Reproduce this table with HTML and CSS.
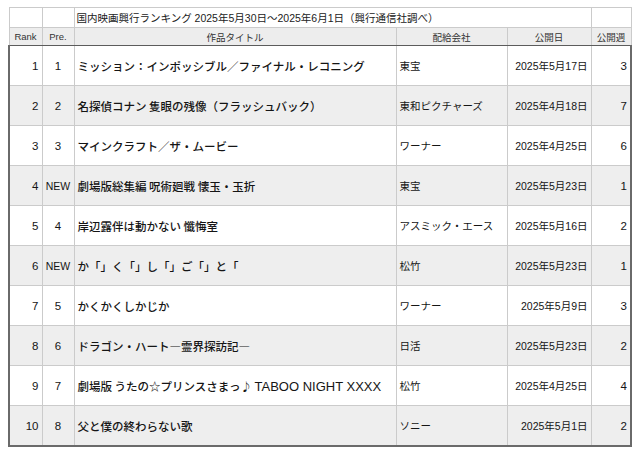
FILE: index.html
```html
<!DOCTYPE html>
<html lang="ja">
<head>
<meta charset="utf-8">
<link rel="stylesheet" href="styles.css">
</head>
<body>
<table class="rank-table">
  <colgroup>
    <col class="c-rank"><col class="c-pre"><col class="c-title"><col class="c-dist"><col class="c-date"><col class="c-week">
  </colgroup>
  <thead>
    <tr class="caption-row">
      <td></td><td></td>
      <td colspan="3" class="caption">国内映画興行ランキング 2025年5月30日〜2025年6月1日（興行通信社調べ）</td>
      <td></td>
    </tr>
    <tr class="head-row">
      <th>Rank</th><th>Pre.</th><th>作品タイトル</th><th>配給会社</th><th>公開日</th><th>公開週</th>
    </tr>
  </thead>
  <tbody>
    <tr><td class="rank">1</td><td class="pre">1</td><td class="title">ミッション：インポッシブル／ファイナル・レコニング</td><td class="dist">東宝</td><td class="date">2025年5月17日</td><td class="week">3</td></tr>
    <tr class="alt"><td class="rank">2</td><td class="pre">2</td><td class="title">名探偵コナン 隻眼の残像（フラッシュバック）</td><td class="dist">東和ピクチャーズ</td><td class="date">2025年4月18日</td><td class="week">7</td></tr>
    <tr><td class="rank">3</td><td class="pre">3</td><td class="title">マインクラフト／ザ・ムービー</td><td class="dist">ワーナー</td><td class="date">2025年4月25日</td><td class="week">6</td></tr>
    <tr class="alt"><td class="rank">4</td><td class="pre new">NEW</td><td class="title">劇場版総集編 呪術廻戦 懐玉・玉折</td><td class="dist">東宝</td><td class="date">2025年5月23日</td><td class="week">1</td></tr>
    <tr><td class="rank">5</td><td class="pre">4</td><td class="title">岸辺露伴は動かない 懺悔室</td><td class="dist">アスミック・エース</td><td class="date">2025年5月16日</td><td class="week">2</td></tr>
    <tr class="alt"><td class="rank">6</td><td class="pre new">NEW</td><td class="title">か「」く「」し「」ご「」と「</td><td class="dist">松竹</td><td class="date">2025年5月23日</td><td class="week">1</td></tr>
    <tr><td class="rank">7</td><td class="pre">5</td><td class="title">かくかくしかじか</td><td class="dist">ワーナー</td><td class="date">2025年5月9日</td><td class="week">3</td></tr>
    <tr class="alt"><td class="rank">8</td><td class="pre">6</td><td class="title">ドラゴン・ハート―霊界探訪記―</td><td class="dist">日活</td><td class="date">2025年5月23日</td><td class="week">2</td></tr>
    <tr><td class="rank">9</td><td class="pre">7</td><td class="title">劇場版 うたの☆プリンスさまっ♪ <span class="latin">TABOO NIGHT XXXX</span></td><td class="dist">松竹</td><td class="date">2025年4月25日</td><td class="week">4</td></tr>
    <tr class="alt"><td class="rank">10</td><td class="pre">8</td><td class="title">父と僕の終わらない歌</td><td class="dist">ソニー</td><td class="date">2025年5月1日</td><td class="week">2</td></tr>
  </tbody>
</table>
</body>
</html>
```
FILE: styles.css
```css
html, body {
  margin: 0;
  padding: 0;
  background: #ffffff;
}
body {
  padding: 7px 0 0 8px;
  font-family: "Liberation Sans", "Noto Sans CJK JP", sans-serif;
  color: #151515;
}
.rank-table {
  border-collapse: collapse;
  table-layout: fixed;
  width: 622px;
}
.c-rank { width: 33px; }
.c-pre { width: 32px; }
.c-title { width: 322px; }
.c-dist { width: 111px; }
.c-date { width: 84px; }
.c-week { width: 40px; }

.rank-table td, .rank-table th {
  border: 1px solid #cbcbcb;
  padding: 0 3px;
  white-space: nowrap;
  overflow: hidden;
}
.caption-row td {
  height: 19px;
  font-size: 10.5px;
  color: #222;
  padding-left: 2px;
}
.head-row th {
  height: 17px;
  background: #ededed;
  font-weight: normal;
  font-size: 9.5px;
  color: #333;
  text-align: center;
  border-bottom: 1px solid #5c5c5c;
}
tbody td {
  height: 39px;
  font-size: 10.5px;
}
tbody tr.alt td {
  background: #eeeeee;
}
tbody tr td:first-child {
  border-left: 2px solid #6a6a6a;
}
tbody tr td:last-child {
  border-right: 2px solid #6a6a6a;
}
tbody tr:last-child td {
  border-bottom: 2px solid #6a6a6a;
}
.rank {
  text-align: right;
  font-size: 11.5px;
}
.pre {
  text-align: center;
  font-size: 11.5px;
}
.pre.new {
  font-size: 10.5px;
  padding: 0;
}
.title {
  font-family: "Noto Sans CJK JP", sans-serif;
  font-size: 11.5px;
  font-weight: 500;
  padding-left: 3px;
}
.latin {
  font-family: "Liberation Sans", sans-serif;
  font-size: 13px;
  font-weight: normal;
}
.dist {
  font-size: 10.5px;
  padding-left: 2px;
}
.date {
  text-align: right;
  font-size: 10.5px;
}
.week {
  text-align: right;
  font-size: 11.5px;
}
```
